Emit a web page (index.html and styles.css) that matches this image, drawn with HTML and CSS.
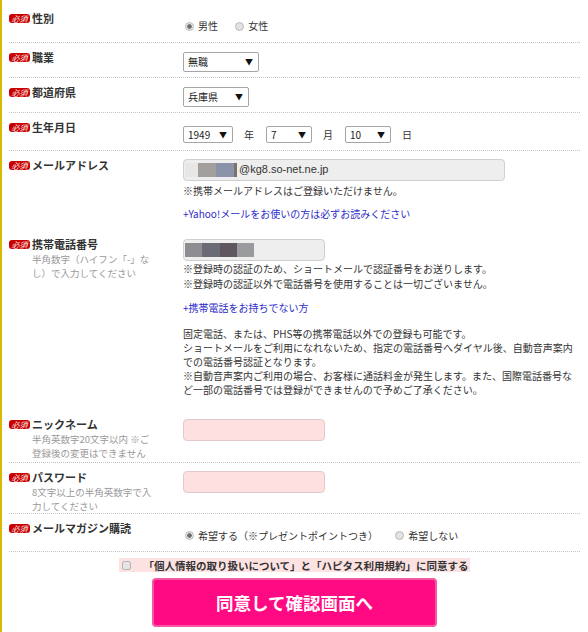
FILE: index.html
```html
<!DOCTYPE html>
<html>
<head>
    <meta charset="utf-8">
    <title>会員登録</title>
    <link rel="stylesheet" href="styles.css">
</head>
<body>
    <div class="page">
        <div class="form">
            <div class="row row-radio">
                <div class="label"><div class="title"><span class="req">必須</span>性別</div></div>
                <div class="value">
                    <span class="opt"><span class="radio checked"></span>男性</span>
                    <span class="opt"><span class="radio"></span>女性</span>
                </div>
            </div>
            <div class="row row-select">
                <div class="label"><div class="title"><span class="req">必須</span>職業</div></div>
                <div class="value">
                    <span class="select w76"><select><option>無職</option></select></span>
                </div>
            </div>
            <div class="row row-select">
                <div class="label"><div class="title"><span class="req">必須</span>都道府県</div></div>
                <div class="value">
                    <span class="select w66"><select><option>兵庫県</option></select></span>
                </div>
            </div>
            <div class="row row-date">
                <div class="label"><div class="title"><span class="req">必須</span>生年月日</div></div>
                <div class="value date">
                    <span class="select small w50"><select><option>1949</option></select></span>
                    <span class="unit">年</span>
                    <span class="select small w46"><select><option>7</option></select></span>
                    <span class="unit">月</span>
                    <span class="select small w46"><select><option>10</option></select></span>
                    <span class="unit">日</span>
                </div>
            </div>
            <div class="row row-email plain">
                <div class="label"><div class="title"><span class="req">必須</span>メールアドレス</div></div>
                <div class="value">
                    <div class="field field-mail">
                        <span class="blur" style="width:13px;background:#e9e7e5"></span><span class="blur" style="width:18px;background:#a39f9c"></span><span class="blur" style="width:18px;background:#8b93a8"></span><span class="blur" style="width:3px;background:#7b726b"></span>@kg8.so-net.ne.jp
                    </div>
                    <div class="note">※携帯メールアドレスはご登録いただけません。</div>
                    <a class="link" href="#">+Yahoo!メールをお使いの方は必ずお読みください</a>
                </div>
            </div>
            <div class="row row-phone plain">
                <div class="label">
                    <div class="title"><span class="req">必須</span>携帯電話番号</div>
                    <div class="sub">半角数字（ハイフン「-」な<br>し）で入力してください</div>
                </div>
                <div class="value">
                    <div class="field field-tel">
                        <span class="blur" style="width:17px;background:#8e8e92"></span><span class="blur" style="width:18px;background:#6b6b75"></span><span class="blur" style="width:17px;background:#5f575f"></span><span class="blur" style="width:17px;background:#999b9f"></span>
                    </div>
                    <div class="note">※登録時の認証のため、ショートメールで認証番号をお送りします。<br>※登録時の認証以外で電話番号を使用することは一切ございません。</div>
                    <a class="link" href="#">+携帯電話をお持ちでない方</a>
                    <p class="info">固定電話、または、PHS等の携帯電話以外での登録も可能です。<br>ショートメールをご利用になれないため、指定の電話番号へダイヤル後、自動音声案内<br>での電話番号認証となります。<br>※自動音声案内ご利用の場合、お客様に通話料金が発生します。また、国際電話番号な<br>ど一部の電話番号では登録ができませんので予めご了承ください。</p>
                </div>
            </div>
            <div class="row row-nick">
                <div class="label">
                    <div class="title"><span class="req">必須</span>ニックネーム</div>
                    <div class="sub">半角英数字20文字以内 ※ご<br>登録後の変更はできません</div>
                </div>
                <div class="value">
                    <input class="field field-pink" type="text">
                </div>
            </div>
            <div class="row row-pass">
                <div class="label">
                    <div class="title"><span class="req">必須</span>パスワード</div>
                    <div class="sub">8文字以上の半角英数字で入<br>力してください</div>
                </div>
                <div class="value">
                    <input class="field field-pink" type="password">
                </div>
            </div>
            <div class="row row-radio">
                <div class="label"><div class="title"><span class="req">必須</span>メールマガジン購読</div></div>
                <div class="value">
                    <span class="opt"><span class="radio checked"></span>希望する（※プレゼントポイントつき）</span>
                    <span class="opt"><span class="radio"></span>希望しない</span>
                </div>
            </div>
        </div>

        <div class="agree">
            <label class="agree-box"><span class="check"></span>「個人情報の取り扱いについて」と「ハピタス利用規約」に同意する</label>
        </div>
        <div class="submit">
            <button class="btn">同意して確認画面へ</button>
        </div>
    </div>
</body>
</html>
```

FILE: styles.css
```css
body {
    margin: 0;
    background: #fff;
    color: #333;
    font-family: "Noto Sans CJK JP", "Liberation Sans", sans-serif;
}

.page {
    box-sizing: border-box;
    min-height: 632px;
    border-left: 2px solid #d8b800;
    padding: 4px 8px 0 7px;
}

/* form rows */
.row {
    display: flex;
    padding-top: 7px;
    border-bottom: 1px dotted #c3c3c3;
}

.row.plain {
    border-bottom: none;
}

.row-radio { padding-bottom: 8px; }
.row-select { padding-bottom: 5px; }
.row-date { padding-bottom: 7px; }
.row-email { padding-bottom: 9px; }
.row-phone { padding-bottom: 13px; }
.row-nick { padding-bottom: 2px; }
.row-pass { padding-bottom: 0; }

.label {
    width: 174px;
    flex-shrink: 0;
}

.title {
    display: flex;
    align-items: center;
    font-size: 11px;
    line-height: 15px;
    font-weight: bold;
    color: #333;
}

.req {
    display: inline-block;
    width: 21px;
    height: 9px;
    margin-right: 2px;
    border-radius: 3px;
    background: #c80000;
    color: #fff;
    font-size: 8px;
    line-height: 9px;
    font-style: italic;
    font-weight: normal;
    text-align: center;
}

.sub {
    padding-left: 23px;
    font-size: 9.5px;
    line-height: 14px;
    color: #999;
}

.value {
    flex: 1;
    font-size: 10px;
    line-height: 15px;
}

.row-radio .value { padding-top: 8px; line-height: 14px; }
.row-select .value { padding-top: 2px; }
.row-date .value { padding-top: 6px; }
.row-email .value { padding-top: 1px; }
.row-phone .value { padding-top: 2px; }
.row-nick .value { padding-top: 2px; }
.row-pass .value { padding-top: 1px; }

/* radios */
.opt {
    display: inline-flex;
    align-items: center;
    margin-right: 13px;
}

.radio {
    box-sizing: border-box;
    width: 9px;
    height: 9px;
    margin: 0 4px 0 2px;
    border: 1px solid #b9b9b9;
    border-radius: 50%;
    background: #e2e2e2;
}

.radio.checked {
    background: radial-gradient(circle, #6e6e6e 0 2px, #e6e6e6 2.5px);
}

/* selects */
.select {
    position: relative;
    display: inline-block;
    vertical-align: top;
}

.select select {
    box-sizing: border-box;
    width: 100%;
    height: 20px;
    padding: 0 0 0 4px;
    border: 1px solid #a6a6a6;
    border-radius: 2px;
    background: #fff;
    color: #222;
    font-family: inherit;
    font-size: 10px;
    -webkit-appearance: none;
    appearance: none;
}

.select::after {
    content: "▼";
    position: absolute;
    right: 6px;
    top: 0;
    font-size: 8px;
    line-height: 20px;
    color: #111;
    pointer-events: none;
}

.select.small select { height: 17px; }
.select.small::after { line-height: 17px; }

.w76 { width: 76px; }
.w66 { width: 66px; }
.w50 { width: 50px; }
.w46 { width: 46px; }

.date {
    display: flex;
    align-items: flex-start;
}

.unit {
    margin: 0 12px 0 11px;
    line-height: 17px;
}

/* text inputs */
.field {
    box-sizing: border-box;
    display: flex;
    align-items: center;
    height: 22px;
    border: 1px solid #cfcfcf;
    border-radius: 4px;
    background: #eee;
    font-family: "Liberation Sans", sans-serif;
    font-size: 11px;
    color: #333;
}

.field-mail { width: 322px; margin-bottom: 2px; }
.field-tel { width: 142px; }

.blur {
    display: inline-block;
    height: 14px;
}

.field-mail .blur:first-child,
.field-tel .blur:first-child {
    margin-left: 1px;
}

.field-mail .blur:nth-child(4) {
    margin-right: 2px;
}

.field-pink {
    width: 142px;
    border-color: #e3caca;
    background: #fee0e0;
    padding: 0;
}

.note {
    line-height: 15px;
    color: #333;
}

.link {
    display: block;
    margin-top: 8px;
    line-height: 15px;
    color: #2c2cc8;
    text-decoration: none;
}

.row-phone .link { margin-top: 9px; }

.info {
    margin: 12px 0 0;
    line-height: 14px;
    white-space: nowrap;
}

/* agree + submit */
.agree {
    display: flex;
    justify-content: center;
    margin-top: 6px;
}

.agree-box {
    display: flex;
    align-items: center;
    height: 14px;
    padding: 0 1px 0 3px;
    background: #fde2e2;
    font-size: 10.5px;
    font-weight: bold;
    color: #333;
}

.check {
    box-sizing: border-box;
    width: 9px;
    height: 9px;
    margin-right: 12px;
    border: 1px solid #b5b5b5;
    border-radius: 2px;
    background: #e4e4e4;
}

.submit {
    display: flex;
    justify-content: center;
    margin-top: 6px;
}

.btn {
    box-sizing: border-box;
    width: 285px;
    height: 49px;
    border: 2px solid #f45aa2;
    border-radius: 4px;
    background: #ff0a82;
    color: #fff;
    font-family: inherit;
    font-size: 17.5px;
    font-weight: bold;
}
```
